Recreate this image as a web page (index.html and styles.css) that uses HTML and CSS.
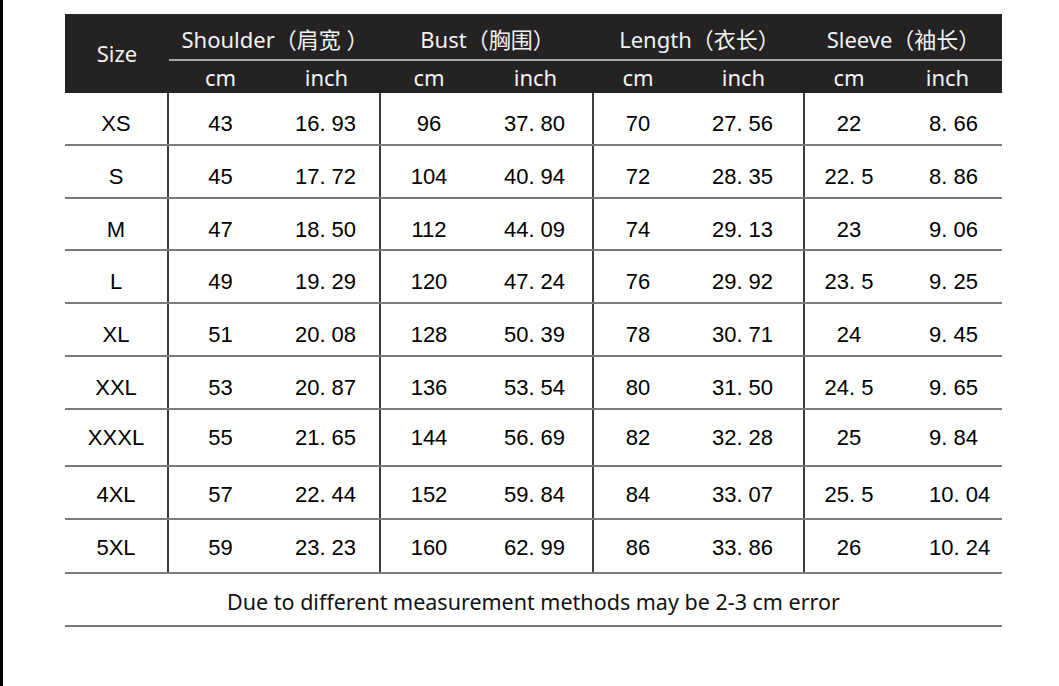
FILE: index.html
```html
<!DOCTYPE html>
<html lang="en">
<head>
<meta charset="utf-8">
<title>Size Chart</title>
<link rel="stylesheet" href="styles.css">
</head>
<body>
<div class="page">
  <div class="chart">
    <div class="head">
      <div class="h-size">Size</div>
      <div class="h-group">Shoulder（肩宽 ）</div>
      <div class="h-group">Bust（胸围）</div>
      <div class="h-group">Length（衣长）</div>
      <div class="h-group">Sleeve（袖长）</div>
      <div class="h-unit">cm</div><div class="h-unit">inch</div>
      <div class="h-unit">cm</div><div class="h-unit">inch</div>
      <div class="h-unit">cm</div><div class="h-unit">inch</div>
      <div class="h-unit">cm</div><div class="h-unit">inch</div>
    </div>

    <div class="row r53 low"><div class="c size">XS</div><div class="c">43</div><div class="c end">16. 93</div><div class="c">96</div><div class="c end">37. 80</div><div class="c">70</div><div class="c end">27. 56</div><div class="c">22</div><div class="c last">8. 66</div></div>
    <div class="row r53 low"><div class="c size">S</div><div class="c">45</div><div class="c end">17. 72</div><div class="c">104</div><div class="c end">40. 94</div><div class="c">72</div><div class="c end">28. 35</div><div class="c">22. 5</div><div class="c last">8. 86</div></div>
    <div class="row r52 low"><div class="c size">M</div><div class="c">47</div><div class="c end">18. 50</div><div class="c">112</div><div class="c end">44. 09</div><div class="c">74</div><div class="c end">29. 13</div><div class="c">23</div><div class="c last">9. 06</div></div>
    <div class="row r53 low"><div class="c size">L</div><div class="c">49</div><div class="c end">19. 29</div><div class="c">120</div><div class="c end">47. 24</div><div class="c">76</div><div class="c end">29. 92</div><div class="c">23. 5</div><div class="c last">9. 25</div></div>
    <div class="row r53 low"><div class="c size">XL</div><div class="c">51</div><div class="c end">20. 08</div><div class="c">128</div><div class="c end">50. 39</div><div class="c">78</div><div class="c end">30. 71</div><div class="c">24</div><div class="c last">9. 45</div></div>
    <div class="row r53 low"><div class="c size">XXL</div><div class="c">53</div><div class="c end">20. 87</div><div class="c">136</div><div class="c end">53. 54</div><div class="c">80</div><div class="c end">31. 50</div><div class="c">24. 5</div><div class="c last">9. 65</div></div>
    <div class="row r57"><div class="c size">XXXL</div><div class="c">55</div><div class="c end">21. 65</div><div class="c">144</div><div class="c end">56. 69</div><div class="c">82</div><div class="c end">32. 28</div><div class="c">25</div><div class="c last">9. 84</div></div>
    <div class="row r53 mid"><div class="c size">4XL</div><div class="c">57</div><div class="c end">22. 44</div><div class="c">152</div><div class="c end">59. 84</div><div class="c">84</div><div class="c end">33. 07</div><div class="c">25. 5</div><div class="c last">10. 04</div></div>
    <div class="row r54 mid"><div class="c size">5XL</div><div class="c">59</div><div class="c end">23. 23</div><div class="c">160</div><div class="c end">62. 99</div><div class="c">86</div><div class="c end">33. 86</div><div class="c">26</div><div class="c last">10. 24</div></div>

    <div class="note">Due to different measurement methods may be 2-3 cm error</div>
  </div>
</div>
</body>
</html>
```

FILE: styles.css
```css
* { box-sizing: border-box; }

html, body {
  margin: 0;
  padding: 0;
  background: #ffffff;
}

.page {
  min-height: 686px;
  border-left: 3px solid #000000;
  padding: 14px 0 0 62px;
}

.chart {
  width: 937px;
}

.head {
  display: grid;
  grid-template-columns: 104px 103px 109px 96px 117px 88px 123px 88px 109px;
  grid-template-rows: 47px 32px;
  background: #242222;
  color: #f2f2f2;
  font-family: "Noto Sans", "Noto Sans CJK SC", sans-serif;
  font-size: 22px;
}

.h-size {
  grid-row: 1 / span 2;
  display: flex;
  align-items: center;
  justify-content: center;
  padding-bottom: 2px;
}

.h-group {
  grid-column: span 2;
  display: flex;
  align-items: center;
  justify-content: center;
  border-bottom: 2px solid #a9a9a9;
  padding-top: 2px;
}

.h-unit {
  display: flex;
  align-items: center;
  justify-content: center;
  padding-bottom: 1px;
}

.row {
  display: grid;
  grid-template-columns: 104px 103px 109px 96px 117px 88px 123px 88px 109px;
  border-bottom: 2px solid #7b7b7b;
  font-family: "Liberation Sans", Arial, sans-serif;
  font-size: 22px;
  color: #000000;
}

.r52 { height: 52px; }
.r53 { height: 53px; }
.r54 { height: 54px; }
.r57 { height: 57px; }

.c {
  display: flex;
  align-items: center;
  justify-content: center;
}

.low .c { padding-top: 11px; }
.mid .c { padding-top: 4px; }

.c.size,
.c.end {
  border-right: 2px solid #3d3d3d;
}

.c.last {
  justify-content: flex-start;
  padding-left: 36px;
}

.note {
  height: 53px;
  display: flex;
  align-items: center;
  justify-content: center;
  border-bottom: 2px solid #7b7b7b;
  font-family: "Noto Sans", sans-serif;
  font-size: 21.5px;
  color: #111111;
  padding-top: 4px;
}
```
